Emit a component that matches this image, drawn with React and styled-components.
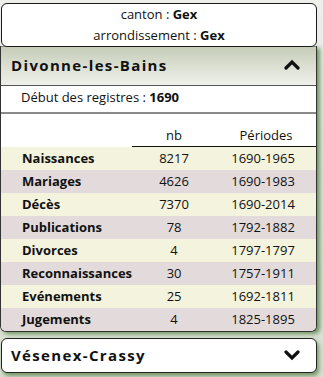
import React from "react";
import styled, { createGlobalStyle } from "styled-components";

const Global = createGlobalStyle`
  html, body { margin: 0; padding: 0; }
  body {
    background: linear-gradient(180deg, #eeeeea 0%, #e4e8df 40%, #d9e0d2 100%);
    font-family: "Open Sans", "Noto Sans", sans-serif;
    color: #111;
    width: 323px;
    height: 377px;
    overflow: hidden;
  }
`;

const Page = styled.div`
  width: 316px;
  padding: 3px 0 0 1px;
  display: flex;
  flex-direction: column;
`;

const InfoCard = styled.div`
  background: #fff;
  border: 1px solid #1a1a1a;
  border-radius: 6px;
  text-align: center;
  font-size: 13px;
  line-height: 21px;
  padding: 0;
  position: relative;
  z-index: 1;
`;

const InfoLine = styled.div`
  height: 21px;
`;

const Panel = styled.div`
  margin-left: -1px;
  margin-top: -1px;
  background: #fff;
  border: 1px solid #333;
  border-top: none;
  border-radius: 0 0 6px 6px;
  box-shadow: 3px 2px 4px rgba(70, 120, 55, 0.75);
  overflow: hidden;
`;

const Header = styled.div`
  height: 40px;
  box-sizing: border-box;
  padding: 0 16px 2px 10px;
  display: flex;
  align-items: center;
  justify-content: space-between;
  background: linear-gradient(180deg, #c5ccb7 0%, #dfe3d7 60%, #eef0ea 100%);
  border-top: 1px solid #888;
  border-bottom: 1px solid #555;
`;

const Title = styled.span`
  font-weight: 700;
  font-size: 15px;
  letter-spacing: 1.35px;
  color: #111;
`;

const Intro = styled.div`
  height: 28px;
  box-sizing: border-box;
  padding: 0 0 4px 20px;
  display: flex;
  align-items: center;
  font-size: 13px;
  border-bottom: 2px solid #8a8a8a;
`;

const Table = styled.table`
  width: 100%;
  border-collapse: collapse;
  font-size: 13px;
  margin-top: 10px;
`;

const HeadCell = styled.th`
  font-weight: 400;
  text-align: center;
  height: 22px;
  padding: 0;
  border-bottom: ${(p) => (p.$line ? "1px solid #111" : "none")};
`;

const Row = styled.tr`
  background: ${(p) => (p.$odd ? "#e3dbdb" : "#f4f3dd")};
  height: 23px;
`;

const Label = styled.td`
  font-weight: 700;
  padding: 0 0 0 21px;
  width: 106px;
`;

const Num = styled.td`
  text-align: center;
  padding: 0;
  width: 84px;
`;

const Period = styled.td`
  text-align: center;
  padding: 0 6px 0 0;
`;

const ClosedCard = styled.div`
  margin-top: 6px;
  background: #fff;
  border: 1px solid #222;
  border-radius: 6px;
  height: 35px;
  box-sizing: border-box;
  display: flex;
  align-items: center;
  justify-content: space-between;
  padding: 0 16px 0 9px;
  box-shadow: 2px 3px 4px rgba(70, 120, 55, 0.7);
`;

const Chevron = ({ up }) => (
  <svg width="16" height="12" viewBox="0 0 16 12">
    <polyline
      points={up ? "2,9 8,3 14,9" : "2,3 8,9 14,3"}
      fill="none"
      stroke="#111"
      strokeWidth="3.2"
      strokeLinecap="round"
      strokeLinejoin="miter"
    />
  </svg>
);

const rows = [
  ["Naissances", "8217", "1690-1965"],
  ["Mariages", "4626", "1690-1983"],
  ["Décès", "7370", "1690-2014"],
  ["Publications", "78", "1792-1882"],
  ["Divorces", "4", "1797-1797"],
  ["Reconnaissances", "30", "1757-1911"],
  ["Evénements", "25", "1692-1811"],
  ["Jugements", "4", "1825-1895"],
];

export default function App() {
  return (
    <>
      <Global />
      <Page>
        <InfoCard>
          <InfoLine>
            canton : <b>Gex</b>
          </InfoLine>
          <InfoLine>
            arrondissement : <b>Gex</b>
          </InfoLine>
        </InfoCard>
        <Panel>
          <Header>
            <Title>Divonne-les-Bains</Title>
            <Chevron up />
          </Header>
          <Intro>
            Début des registres :&nbsp;<b>1690</b>
          </Intro>
          <Table>
            <thead>
              <tr>
                <HeadCell />
                <HeadCell $line>nb</HeadCell>
                <HeadCell $line>Périodes</HeadCell>
              </tr>
            </thead>
            <tbody>
              {rows.map((r, i) => (
                <Row key={r[0]} $odd={i % 2 === 1}>
                  <Label>{r[0]}</Label>
                  <Num>{r[1]}</Num>
                  <Period>{r[2]}</Period>
                </Row>
              ))}
            </tbody>
          </Table>
        </Panel>
        <ClosedCard>
          <Title>Vésenex-Crassy</Title>
          <Chevron />
        </ClosedCard>
      </Page>
    </>
  );
}
